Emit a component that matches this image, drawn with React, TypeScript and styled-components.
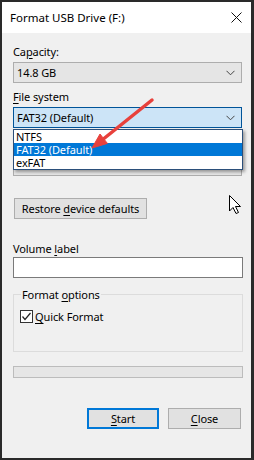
import React from 'react';
import styled, { createGlobalStyle } from 'styled-components';

const Global = createGlobalStyle`
  html, body { margin: 0; padding: 0; background: #2a2a2a; }
  body { font-family: "Noto Sans", "Liberation Sans", sans-serif; font-size: 11px; color: #000; }
  u { text-decoration: underline; text-underline-offset: 2px; }
`;

const Window = styled.div`
  position: relative;
  margin: 2px 3px 0 2px;
  width: 249px;
  height: 456px;
  background: #f0f0f0;
  display: flex;
  flex-direction: column;
  overflow: hidden;
`;

const TitleBar = styled.div`
  height: 31px;
  flex: none;
  background: #fff;
  display: flex;
  align-items: center;
  justify-content: space-between;
  padding: 0 9px 0 8px;
`;

const Title = styled.div`
  font-size: 11.5px;
  line-height: 15px;
  color: #000;
`;

const Content = styled.div`
  display: flex;
  flex-direction: column;
  padding: 0 8px 0 11px;
  letter-spacing: -0.1px;
`;

const Label = styled.div<{ $mt: number }>`
  margin-top: ${p => p.$mt}px;
  height: 15px;
  line-height: 15px;
  white-space: nowrap;
`;

const Combo = styled.div<{ $focused?: boolean; $mt: number }>`
  margin-top: ${p => p.$mt}px;
  height: 21px;
  box-sizing: border-box;
  width: 229px;
  display: flex;
  align-items: center;
  justify-content: space-between;
  padding: 0 6px 0 3px;
  background: ${p => (p.$focused ? '#cce4f7' : '#e5e5e5')};
  border: 1px solid ${p => (p.$focused ? '#005499' : '#adadad')};
  line-height: 15px;
`;

const Button = styled.div<{ $w: number; $default?: boolean }>`
  width: ${p => p.$w}px;
  height: 21px;
  box-sizing: border-box;
  display: flex;
  align-items: center;
  justify-content: center;
  background: #e1e1e1;
  border: ${p => (p.$default ? '2px solid #0078d7' : '1px solid #adadad')};
  line-height: 15px;
  white-space: nowrap;
`;

const RestoreButton = styled(Button)`
  margin-top: 22px;
  margin-left: 1px;
`;

const TextInput = styled.div`
  margin-top: 1px;
  height: 21px;
  box-sizing: border-box;
  width: 230px;
  background: #fff;
  border: 1px solid #7a7a7a;
`;

const GroupBox = styled.fieldset`
  margin: 9px 0 0 0;
  padding: 7px 6px 27px 6px;
  width: 230px;
  box-sizing: border-box;
  border: 1px solid #dcdcdc;
  min-width: 0;
`;

const Legend = styled.legend`
  padding: 0 1px;
  margin-left: 1px;
  line-height: 15px;
`;

const CheckRow = styled.label`
  display: flex;
  align-items: center;
  gap: 2px;
  height: 15px;
  line-height: 15px;
`;

const CheckBox = styled.span`
  width: 13px;
  height: 13px;
  box-sizing: border-box;
  border: 1px solid #333;
  background: #fff;
  display: flex;
  align-items: center;
  justify-content: center;
`;

const Progress = styled.div`
  margin-top: 14px;
  height: 12px;
  width: 230px;
  box-sizing: border-box;
  background: #e6e6e6;
  border: 1px solid #bcbcbc;
`;

const ButtonRow = styled.div`
  margin-top: 30px;
  display: flex;
  justify-content: flex-end;
  gap: 9px;
  padding-right: 2px;
`;

const DropList = styled.div`
  position: absolute;
  left: 11px;
  top: 127px;
  width: 230px;
  box-sizing: border-box;
  background: #fff;
  border: 1px solid #2b4f7a;
  box-shadow: 2px 2px 3px rgba(0, 0, 0, 0.35);
  display: flex;
  flex-direction: column;
  letter-spacing: -0.1px;
`;

const Option = styled.div<{ $selected?: boolean }>`
  height: 13px;
  line-height: 13px;
  padding-left: 2px;
  background: ${p => (p.$selected ? '#0078d7' : '#fff')};
  color: ${p => (p.$selected ? '#fff' : '#000')};
`;

const Overlay = styled.svg`
  position: absolute;
  left: 0;
  top: 0;
  pointer-events: none;
`;

const Chevron = () => (
  <svg width="9" height="6" viewBox="0 0 9 6">
    <polyline points="0.5,0.8 4.5,4.8 8.5,0.8" fill="none" stroke="#444" strokeWidth="1" />
  </svg>
);

export default function App() {
  return (
    <>
      <Global />
      <Window>
        <TitleBar>
          <Title>Format USB Drive (F:)</Title>
          <svg width="11" height="11" viewBox="0 0 11 11">
            <path d="M0.5 0.5 L10.5 10.5 M10.5 0.5 L0.5 10.5" stroke="#111" strokeWidth="1" />
          </svg>
        </TitleBar>
        <Content>
          <Label $mt={11}>Ca<u>p</u>acity:</Label>
          <Combo $mt={3}>
            <span>14.8 GB</span>
            <Chevron />
          </Combo>
          <Label $mt={6}><u>F</u>ile system</Label>
          <Combo $mt={3} $focused>
            <span>FAT32 (Default)</span>
            <Chevron />
          </Combo>
          {/* Allocation unit size row: hidden behind the open list */}
          <Label $mt={9} aria-hidden="true" />
          <Combo $mt={3} aria-hidden="true">
            <span />
            <Chevron />
          </Combo>
          <RestoreButton $w={133}>
            <span>Restore <u>d</u>evice defaults</span>
          </RestoreButton>
          <Label $mt={22}>Volume <u>l</u>abel</Label>
          <TextInput />
          <GroupBox>
            <Legend>Format <u>o</u>ptions</Legend>
            <CheckRow>
              <CheckBox>
                <svg width="11" height="11" viewBox="0 0 11 11">
                  <polyline points="1.5,5.5 4,8.5 9.5,2" fill="none" stroke="#222" strokeWidth="1.2" />
                </svg>
              </CheckBox>
              <span><u>Q</u>uick Format</span>
            </CheckRow>
          </GroupBox>
          <Progress />
          <ButtonRow>
            <Button $w={72} $default><span><u>S</u>tart</span></Button>
            <Button $w={73}><span><u>C</u>lose</span></Button>
          </ButtonRow>
        </Content>
        <DropList>
          <Option>NTFS</Option>
          <Option $selected>FAT32 (Default)</Option>
          <Option>exFAT</Option>
        </DropList>
        <Overlay width="249" height="456" viewBox="0 0 249 456">
          <line x1="150" y1="98" x2="102" y2="136.5" stroke="#e8413c" strokeWidth="3.5" strokeLinecap="round" />
          <polygon points="90,146 98,132 105.4,141.4" fill="#e8413c" stroke="#e8413c" strokeWidth="1" strokeLinejoin="round" />
          <path
            d="M227.5 193.5 L227.5 209 L231 205.5 L234 211.5 L236.5 210.5 L233.5 204.5 L238.5 204.5 Z"
            fill="#fff"
            stroke="#000"
            strokeWidth="1"
            strokeLinejoin="round"
          />
        </Overlay>
      </Window>
    </>
  );
}
